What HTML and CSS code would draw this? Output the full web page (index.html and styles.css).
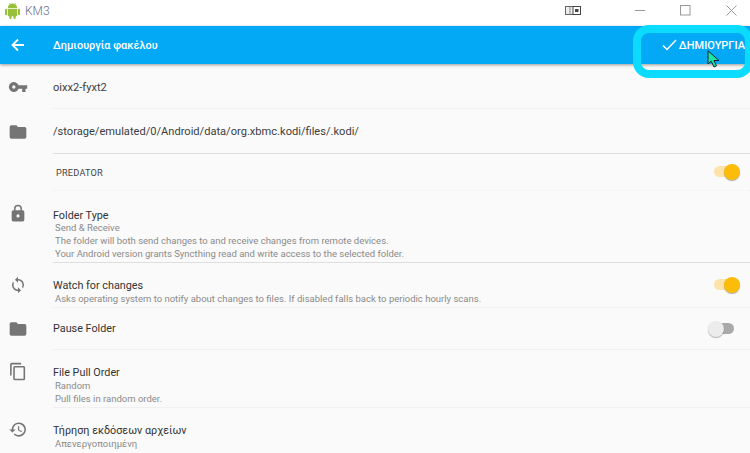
FILE: index.html
```html
<!DOCTYPE html>
<html lang="el">
<head>
<meta charset="utf-8">
<title>KM3</title>
<link rel="stylesheet" href="styles.css">
</head>
<body>
<div class="app">
  <header class="titlebar">
    <div class="title-left">
      <svg class="android" width="15" height="17" viewBox="0 0 16 18"><g fill="#97c03d"><path d="M3 6.400a5 5 0 0 1 10 0z"/><rect x="3" y="7" width="10" height="8" rx="1"/><rect x="0" y="7" width="2.200" height="7" rx="1.100"/><rect x="13.800" y="7" width="2.200" height="7" rx="1.100"/><rect x="4.600" y="14" width="2.400" height="4" rx="1.100"/><rect x="9" y="14" width="2.400" height="4" rx="1.100"/><path d="M4.500 1l1.500 2M11.500 1l-1.500 2" stroke="#97c03d" stroke-width=".7"/></g></svg>
      <span class="app-name">KM3</span>
    </div>
    <div class="win-controls">
      <svg class="win-snap" width="16" height="10" viewBox="0 0 16 10"><rect x=".5" y=".5" width="10" height="8" fill="#eee" stroke="#666"/><rect x="4" y="1" width="2" height="7" fill="#bbb"/><rect x="8" y=".5" width="7.500" height="8" fill="#fff" stroke="#444"/><rect x="10" y="3" width="3.500" height="3" fill="#444"/></svg>
      <svg class="win-min" width="11" height="11" viewBox="0 0 11 11"><path d="M0 5.500h10" stroke="#999"/></svg>
      <svg class="win-max" width="11" height="11" viewBox="0 0 11 11"><rect x=".5" y=".5" width="9.500" height="9.500" fill="none" stroke="#999"/></svg>
      <svg class="win-close" width="11" height="11" viewBox="0 0 11 11"><path d="M.5.500l10 10M10.500.500l-10 10" stroke="#999"/></svg>
    </div>
  </header>

  <div class="toolbar">
    <svg class="back" width="14" height="14" viewBox="0 0 14 14"><path d="M13 7H2M7 1.500L1.500 7 7 12.500" fill="none" stroke="#fff" stroke-width="1.800"/></svg>
    <span class="toolbar-title">Δημιουργία φακέλου</span>
    <div class="action">
      <svg class="check" width="15" height="12" viewBox="0 0 15 12"><path d="M1 6.500l4 4 9-9.500" fill="none" stroke="#fff" stroke-width="1.400"/></svg>
      <span>ΔΗΜΙΟΥΡΓΙΑ</span>
    </div>
  </div>

  <main class="list">
    <div class="row row-id">
      <svg class="icon" width="20" height="20" viewBox="0 0 24 24"><path fill="#757575" d="M12.650 10A6 6 0 1 0 12.650 14H17v4h4v-4h2v-4zM7 14a2 2 0 1 1 0-4 2 2 0 0 1 0 4z"/></svg>
      <div class="cell line"><div class="value">oixx2-fyxt2</div></div>
    </div>
    <div class="row row-path">
      <svg class="icon" width="20" height="20" viewBox="0 0 24 24"><path fill="#757575" d="M10 4H4a2 2 0 0 0-2 2v12a2 2 0 0 0 2 2h16a2 2 0 0 0 2-2V8a2 2 0 0 0-2-2h-8z"/></svg>
      <div class="cell line strong"><div class="value">/storage/emulated/0/Android/data/org.xbmc.kodi/files/.kodi/</div></div>
    </div>
    <div class="row row-device">
      <span class="icon-space"></span>
      <div class="cell line faint between">
        <span class="device">PREDATOR</span>
        <span class="switch on"><span class="track"></span><span class="thumb"></span></span>
      </div>
    </div>
    <div class="row row-type">
      <svg class="icon top-lock" width="19" height="19" viewBox="0 0 24 24"><path fill="#757575" d="M18 8h-1V6a5 5 0 0 0-10 0v2H6a2 2 0 0 0-2 2v10a2 2 0 0 0 2 2h12a2 2 0 0 0 2-2V10a2 2 0 0 0-2-2zm-6 9a2 2 0 1 1 0-4 2 2 0 0 1 0 4zm3.100-9H8.900V6a3.100 3.100 0 0 1 6.200 0z"/></svg>
      <div class="cell line strong block">
        <div class="name">Folder Type</div>
        <div class="sub">Send &amp; Receive</div>
        <div class="sub">The folder will both send changes to and receive changes from remote devices.</div>
        <div class="sub">Your Android version grants Syncthing read and write access to the selected folder.</div>
      </div>
    </div>
    <div class="row row-watch">
      <svg class="icon" width="18" height="18" viewBox="0 0 24 24"><path fill="#757575" d="M12 4V1L8 5l4 4V6a6 6 0 0 1 6 6c0 1-.250 2-.700 2.800l1.500 1.500A8 8 0 0 0 12 4zm0 14a6 6 0 0 1-6-6c0-1 .250-2 .700-2.800L5.200 7.700A8 8 0 0 0 12 20v3l4-4-4-4z"/></svg>
      <div class="cell line between">
        <div class="watch-text">
          <div class="name">Watch for changes</div>
          <div class="sub">Asks operating system to notify about changes to files. If disabled falls back to periodic hourly scans.</div>
        </div>
        <span class="switch on"><span class="track"></span><span class="thumb"></span></span>
      </div>
    </div>
    <div class="row row-pause">
      <svg class="icon" width="20" height="20" viewBox="0 0 24 24"><path fill="#757575" d="M10 4H4a2 2 0 0 0-2 2v12a2 2 0 0 0 2 2h16a2 2 0 0 0 2-2V8a2 2 0 0 0-2-2h-8z"/></svg>
      <div class="cell line between">
        <div class="name">Pause Folder</div>
        <span class="switch off"><span class="track"></span><span class="thumb"></span></span>
      </div>
    </div>
    <div class="row row-order">
      <svg class="icon top-copy" width="19" height="19" viewBox="0 0 24 24"><path fill="#757575" d="M16 1H4a2 2 0 0 0-2 2v14h2V3h12zm3 4H8a2 2 0 0 0-2 2v14a2 2 0 0 0 2 2h11a2 2 0 0 0 2-2V7a2 2 0 0 0-2-2zm0 16H8V7h11z"/></svg>
      <div class="cell line block">
        <div class="name">File Pull Order</div>
        <div class="sub">Random</div>
        <div class="sub">Pull files in random order.</div>
      </div>
    </div>
    <div class="row row-history">
      <svg class="icon top-hist" width="19" height="19" viewBox="0 0 24 24"><path fill="#757575" d="M13 3a9 9 0 0 0-9 9H1l3.900 3.900L9 12H6a7 7 0 1 1 2.050 4.950l-1.420 1.420A9 9 0 1 0 13 3zm-1 5v5l4.280 2.540.720-1.210-3.500-2.080V8z"/></svg>
      <div class="cell block">
        <div class="name">Τήρηση εκδόσεων αρχείων</div>
        <div class="sub">Απενεργοποιημένη</div>
      </div>
    </div>
  </main>

  <div class="highlight"></div>
  <svg class="cursor" width="14" height="18" viewBox="0 0 14 18"><path d="M1 .800V14l3.200-2.800L7 17l2.500-1.200L7 10.500h5z" fill="#19e6a0" stroke="#123" stroke-width="1"/></svg>
</div>
</body>
</html>
```
FILE: styles.css
```css
* { box-sizing: border-box; }
html, body { margin: 0; padding: 0; }
body { font-family: Roboto, "Noto Sans", sans-serif; color: #333; background: #fafafa; }
.app { position: relative; width: 750px; height: 453px; overflow: hidden; background: #fafafa; display: flex; flex-direction: column; }

.titlebar { height: 26px; background: #fff; display: flex; justify-content: space-between; align-items: center; flex: none; }
.title-left { display: flex; align-items: center; gap: 5px; padding-left: 5px; }
.android { display: block; margin-top: -5px; }
.app-name { font-size: 12px; font-weight: 300; color: #6d6d90; margin-top: -5px; }
.win-controls { display: flex; align-items: center; margin-top: -5px; }
.win-snap { margin-right: 54px; }
.win-min { margin-right: 34px; }
.win-max { margin-right: 35px; }
.win-close { margin-right: 13px; }

.toolbar { height: 38px; background: #03a9f4; color: #fff; display: flex; align-items: center; flex: none; position: relative; box-shadow: 0 1px 3px rgba(0,0,0,.4); z-index: 1; }
.back { margin-left: 11px; flex: none; }
.toolbar-title { margin-left: 28px; font-size: 10.900px; font-weight: 500; flex: 1; }
.action { display: flex; align-items: center; gap: 2px; font-size: 11px; font-weight: 500; padding-right: 5px; }

.list { flex: 1; min-height: 0; }
.row { display: flex; }
.icon { flex: none; margin-left: 8px; margin-right: 25px; align-self: center; width: 20px; }
.icon-space { width: 53px; flex: none; }
.cell { flex: 1; min-width: 0; display: flex; align-items: center; }
.line { border-bottom: 1px solid #f0f0f0; }
.line.strong { border-bottom-color: #dedede; }
.line.faint { border-bottom: 1px dotted #f0f0f0; }
.between { justify-content: space-between; padding-right: 10px; }
.block { display: block; }

.value { font-size: 11.100px; color: #3d3d3d; }
.name { font-size: 10.800px; line-height: 13px; color: #333; }
.sub { font-size: 9.500px; line-height: 13px; color: #8a8a8a; padding-left: 2px; }
.device { font-size: 9.200px; letter-spacing: .2px; color: #444; padding-left: 3px; }

.row-id { height: 45px; }
.row-id .cell { padding-top: 2px; }
.row-path { height: 45px; }
.row-path .cell { padding-top: 1px; }
.row-device { height: 37px; }
.row-type { height: 72px; }
.row-type .cell { padding-top: 18px; }
.row-type .name { margin-bottom: -1px; }
.top-lock { align-self: flex-start; margin-top: 13px; }
.row-watch { height: 45px; }
.row-watch .icon { align-self: flex-start; margin-top: 13px; }
.watch-text { align-self: flex-start; margin-top: 16px; }
.row-pause { height: 42px; }
.row-order { height: 58px; }
.row-order .cell { padding-top: 16px; }
.top-copy { align-self: flex-start; margin-top: 12px; }
.row-history { height: 45px; }
.row-history .cell { padding-top: 16px; }
.top-hist { align-self: flex-start; margin-top: 12px; }

.switch { position: relative; width: 26px; height: 16px; flex: none; display: block; }
.track { position: absolute; top: 2px; height: 11px; border-radius: 6px; }
.thumb { position: absolute; top: 0; width: 16px; height: 16px; border-radius: 50%; box-shadow: 0 1px 1px rgba(0,0,0,.3); }
.on .track { background: #fde3ab; left: 0; width: 20px; }
.on .thumb { background: #fbbc0a; left: 10px; }
.off { margin-right: 6px; }
.off .track { background: #a9a9a9; left: 8px; width: 18px; }
.off .thumb { background: #ececec; left: 0; }

.highlight { position: absolute; left: 633px; top: 25px; width: 120px; height: 53px; border: 8px solid #0bdcff; border-radius: 16px; z-index: 2; }
.cursor { position: absolute; left: 707px; top: 50px; z-index: 3; }
```
